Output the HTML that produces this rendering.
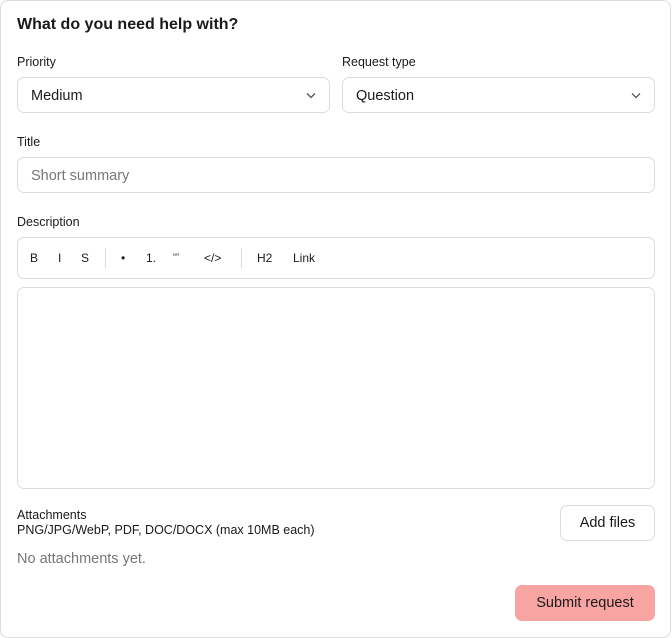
<!DOCTYPE html>
<html><head><style>
*{box-sizing:border-box;margin:0;padding:0}
body{width:672px;height:638px;background:#fff;font-family:"Liberation Sans",sans-serif;color:#1a1a1a;position:relative;overflow:hidden}
.card{position:absolute;left:0;top:0;width:671px;height:638px;border:1px solid #dcdcdc;border-radius:8px}
.a{position:absolute}
.box{position:absolute;border:1px solid #dcdcdc;border-radius:7px;background:#fff}
.lbl{font-size:12.5px;color:#1a1a1a}
.val{font-size:14.5px;position:absolute;left:13px;top:10px}
.chev{position:absolute;right:13px;top:14px}
.tb{position:absolute;top:13px;font-size:12px}
</style></head><body>
<div class="card"></div>
<div class="a" style="left:17px;top:16px;font-size:16px;font-weight:bold">What do you need help with?</div>
<div class="a lbl" style="left:17px;top:55px">Priority</div>
<div class="a lbl" style="left:342px;top:55px">Request type</div>
<div class="box" style="left:17px;top:77px;width:313px;height:36px"><span class="val">Medium</span>
<svg class="chev" width="10" height="7" viewBox="0 0 10 7"><path d="M1 1.5l4 4 4-4" fill="none" stroke="#555" stroke-width="1.3"/></svg></div>
<div class="box" style="left:342px;top:77px;width:313px;height:36px"><span class="val">Question</span>
<svg class="chev" width="10" height="7" viewBox="0 0 10 7"><path d="M1 1.5l4 4 4-4" fill="none" stroke="#555" stroke-width="1.3"/></svg></div>
<div class="a lbl" style="left:17px;top:135px">Title</div>
<div class="box" style="left:17px;top:157px;width:638px;height:36px"><span class="val" style="color:#777">Short summary</span></div>
<div class="a lbl" style="left:17px;top:215px">Description</div>
<div class="box" style="left:17px;top:237px;width:638px;height:42px">
<span class="tb" style="left:12px">B</span><span class="tb" style="left:40px">I</span><span class="tb" style="left:63px">S</span>
<span class="a" style="left:87px;top:10px;width:1px;height:20px;background:#ddd"></span>
<span class="tb" style="left:103px">•</span><span class="tb" style="left:128px">1.</span><span class="tb" style="left:155px;top:14px;font-size:9px">“”</span><span class="tb" style="left:186px">&lt;/&gt;</span>
<span class="a" style="left:223px;top:10px;width:1px;height:20px;background:#ddd"></span>
<span class="tb" style="left:239px">H2</span><span class="tb" style="left:275px">Link</span>
</div>
<div class="box" style="left:17px;top:287px;width:638px;height:202px"></div>
<div class="a" style="left:17px;top:508px;font-size:12.5px">Attachments</div>
<div class="a" style="left:17px;top:523px;font-size:12.5px">PNG/JPG/WebP, PDF, DOC/DOCX (max 10MB each)</div>
<div class="box" style="left:560px;top:505px;width:95px;height:36px;text-align:center;line-height:35px;font-size:14.5px">Add files</div>
<div class="a" style="left:17px;top:551px;font-size:14.5px;color:#777">No attachments yet.</div>
<div class="a" style="left:515px;top:585px;width:140px;height:36px;border-radius:7px;background:#f8a4a2;text-align:center;line-height:37px;font-size:14.5px">Submit request</div>
</body></html>
